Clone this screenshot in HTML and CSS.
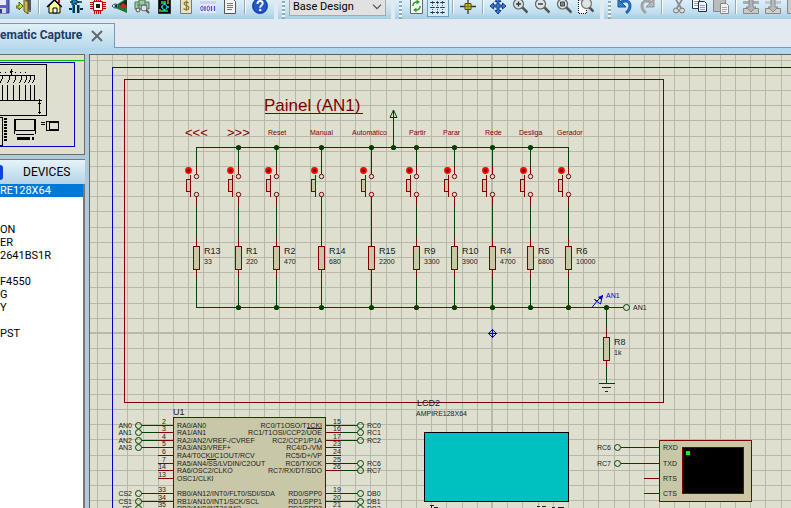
FILE: index.html
```html
<!DOCTYPE html>
<html lang="en">
<head>
<meta charset="utf-8">
<title>Schematic Capture</title>
<link rel="stylesheet" href="styles.css">
</head>
<body>
<header class="toolbar">
  <div class="group group-file">
    <button class="tool" aria-label="Save"><svg viewBox="0 0 16 16"><path d="M1 1h14v14H3l-2-2z" fill="#5a62c8" stroke="#303a90"/><path d="M4 1h8v6H4z" fill="#e8ecff"/><path d="M4 10h8v5H4z" fill="#d8d8d8"/><path d="M5 11h3v4H5z" fill="#303a90"/></svg></button>
    <button class="tool" aria-label="Close project"><svg viewBox="0 0 16 16"><path d="M8 1h7v11H8z" fill="#555"/><path d="M8 1l4 3v12l-4-3z" fill="#c8b858" stroke="#5d5318"/><path d="M12 12h3v2h-3z" fill="#777"/><path d="M0 8h3V4l4 4-4 4v-2H0z" fill="#c8e020" stroke="#4a6010"/></svg></button>
    <span class="sep"></span>
    <button class="tool" aria-label="Home"><svg viewBox="0 0 16 16"><path d="M3 8v7h11V8L8.500 2z" fill="#ffff80" stroke="#000"/><path d="M1 9l7.500-7L16 9" fill="none" stroke="#000" stroke-width="1.500"/><path d="M7 10h4v5H7z" fill="#f8f8ff" stroke="#000"/><path d="M12 1h2v4h-2z" fill="#a02020"/></svg></button>
    <button class="tool" aria-label="Schematic capture"><svg viewBox="0 0 16 16"><path d="M8 0v7M2 4h12" stroke="#083040" stroke-width="1.500"/><path d="M4 0l7 4-7 3z" fill="#1880c8" stroke="#083040"/><path d="M1 11h4M11 11h4" stroke="#083040" stroke-width="2"/><path d="M6 7v8M10 7v8" stroke="#083040" stroke-width="2"/><path d="M4.500 7v8M11.500 7v8" stroke="#3098d8"/></svg></button>
    <button class="tool" aria-label="PCB layout"><svg viewBox="0 0 16 16"><path d="M4.500 0v16M6.500 0v16M8.500 0v16M10.500 0v16M0 4.500h16M0 6.500h16M0 8.500h16M0 10.500h16" stroke="#c00000"/><path d="M3.500 3.500h9v9h-9z" fill="#fff" stroke="#c00000"/><path d="M6 6h4v4H6z" fill="#181818"/></svg></button>
    <button class="tool" aria-label="3D visualizer"><svg viewBox="0 0 16 16"><path d="M15 0v15L1 9z" fill="#187830"/><path d="M15 1v8L7 7z" fill="#103020"/><path d="M11 5l4 3-4 3-3-3z" fill="#e02020"/><path d="M0 8q3-4 7 0-4 4-7 0z" fill="#d8eef8" stroke="#285060"/><circle cx="4" cy="8" r="1.500" fill="#203038"/></svg></button>
    <button class="tool" aria-label="Gerber viewer"><svg viewBox="0 0 16 16"><path d="M1 4h4V2h6v2h4v7H1z" fill="#9ccc9c" stroke="#52705a"/><path d="M3 7h10M5 4v7M11 4v7" stroke="#57725d"/><circle cx="4" cy="12" r="2" fill="#d5e3e8" stroke="#555"/><circle cx="10" cy="10" r="3" fill="#d5e3e8" stroke="#667"/><path d="M12 12l3 3" stroke="#555" stroke-width="2"/></svg></button>
    <button class="tool" aria-label="Design explorer"><svg viewBox="0 0 16 16"><path d="M2.500 .5h12v15h-12z" fill="#000" stroke="#303030"/><path d="M5 3h5v3H5zM5 12h7v2H5z" fill="#00b030"/><path d="M8.500 5v8M5 9h8" stroke="#00e8f0" stroke-width="1.500"/><circle cx="8.500" cy="9" r="2.500" fill="#000" stroke="#00e8f0"/><path d="M12 2v4M4 11v3" stroke="#e8ec40"/></svg></button>
    <button class="tool" aria-label="Bill of materials"><svg viewBox="0 0 16 16"><path d="M2.500 .5h11v15h-11z" fill="#e8e2c8" stroke="#777"/><path d="M10.500 5q-2-2-4-.5-1 2.500 2 3 3 1 2 3.500-3 1.500-5-.5M8.500 2.500v10.500" fill="none" stroke="#8c7a28" stroke-width="1.300"/></svg></button>
    <button class="tool" aria-label="Source code"><svg viewBox="0 0 16 16"><path d="M0 0h16v15H0z" fill="#e6eaff"/><path d="M0 3h16v3H0z" fill="#c9d6f0"/><ellipse cx="2" cy="10.500" rx="1.200" ry="2.500" fill="none" stroke="#5050c8"/><path d="M5 8v5M11.500 8v5M14.500 8v5" stroke="#5050c8" stroke-width="1.300"/><ellipse cx="8.300" cy="10.500" rx="1.200" ry="2.500" fill="none" stroke="#5050c8"/></svg></button>
    <button class="tool" aria-label="Project notes"><svg viewBox="0 0 16 16"><path d="M2.500 .5h8l3 3v12h-11z" fill="#f5f5f5" stroke="#555"/><path d="M5 5.500h6M5 7.500h6M5 9.500h6M5 11.500h5" stroke="#777"/></svg></button>
    <span class="sep"></span>
    <button class="tool" aria-label="Help"><svg viewBox="0 0 16 16"><circle cx="8" cy="8" r="8" fill="#2458c8"/><circle cx="8" cy="8" r="7" fill="none" stroke="#1a3e98"/><path d="M5.500 6q0-3 2.700-3 2.500 0 2.500 2.200 0 1.500-1.600 2.500-.9.600-.9 2" fill="none" stroke="#fff" stroke-width="1.900"/><circle cx="8.200" cy="12" r="1.200" fill="#fff"/></svg></button>
  </div>
  <div class="group group-variant">
    <span class="grip"></span>
    <label class="variant"><span class="hidden-label">Variant</span>
      <select><option>Base Design</option></select>
      <svg class="chevron" viewBox="0 0 10 6"><path d="M1 .7l4 4 4-4" fill="none" stroke="#505050" stroke-width="1.200"/></svg>
    </label>
  </div>
  <div class="group">
    <span class="grip"></span>
    <button class="tool" aria-label="Redraw"><svg viewBox="0 0 16 16"><path d="M2.500 .5h12v15h-12z" fill="#f6f6f6" stroke="#666"/><path d="M5 8q0-4 4-4M12 8q0 4-4 4" fill="none" stroke="#30a030" stroke-width="1.600"/><path d="M8.500 1.500l3.500 2.500-3.500 2.500zM8.500 9.500L5 12l3.500 2.500z" fill="#30a030"/></svg></button>
    <button class="tool pressed" aria-label="Grid"><svg viewBox="0 0 16 16"><path d="M2.500 0v16M7.500 0v16M12.500 0v16M0 3.500h16M0 8.500h16M0 13.500h16" stroke="#505860" stroke-dasharray="1 1"/><path d="M1 8.500h3M6 8.500h3M11 8.500h3M1 13.500h3M6 13.500h3M11 13.500h3M1 3.500h3M6 3.500h3M11 3.500h3" stroke="#303840"/></svg></button>
    <span class="sep"></span>
    <button class="tool" aria-label="Origin"><svg viewBox="0 0 16 16"><path d="M8 1v15M0 8.500h16" stroke="#333" stroke-width="1.300"/><path d="M5 5.500h6v6H5z" fill="#c8b820" stroke="#504a10"/><path d="M8 5.500v6M5 8.500h6" stroke="#807818"/></svg></button>
    <span class="sep"></span>
    <button class="tool" aria-label="Pan"><svg viewBox="0 0 16 16"><path d="M8 0l3 3.500H9V7h3.500V5L16 8l-3.500 3V9H9v3.500h2L8 16l-3-3.500h2V9H3.500v2L0 8l3.500-3v2H7V3.500H5z" fill="#3080e0" stroke="#102c68" stroke-width=".9"/></svg></button>
    <button class="tool" aria-label="Zoom in"><svg viewBox="0 0 16 16"><path d="M10 9l5.500 5.500" stroke="#555" stroke-width="2.500"/><circle cx="6.500" cy="6" r="5" fill="#dce4e8" stroke="#666" stroke-width="1.200"/><path d="M4 6h5M6.500 3.500v5" stroke="#333" stroke-width="1.400"/></svg></button>
    <button class="tool" aria-label="Zoom out"><svg viewBox="0 0 16 16"><path d="M10 9l5.500 5.500" stroke="#555" stroke-width="2.500"/><circle cx="6.500" cy="6" r="5" fill="#dce4e8" stroke="#666" stroke-width="1.200"/><path d="M4 6h5" stroke="#333" stroke-width="1.400"/></svg></button>
    <button class="tool" aria-label="Zoom all"><svg viewBox="0 0 16 16"><path d="M10 9l5.500 5.500" stroke="#555" stroke-width="2.500"/><circle cx="6.500" cy="6" r="5" fill="#dce4e8" stroke="#666" stroke-width="1.200"/><path d="M4.500 4h4v4h-4z" fill="#888" stroke="#444"/></svg></button>
    <button class="tool" aria-label="Zoom area"><svg viewBox="0 0 16 16"><path d="M.5 2h8v13.500h-8z" fill="#fff" stroke="#111" stroke-dasharray="1 1"/><path d="M11 9l4.500 4.500" stroke="#555" stroke-width="2.500"/><circle cx="8.500" cy="5.500" r="5" fill="#dce4e8" stroke="#777" stroke-width="1.200"/></svg></button>
  </div>
  <div class="group group-edit">
    <span class="grip"></span>
    <button class="tool" aria-label="Undo"><svg viewBox="0 0 16 16"><path d="M4 4q9-3 9 4 0 4-4 7" fill="none" stroke="#2868b8" stroke-width="3"/><path d="M1 1v8h8z" fill="#3080d0" stroke="#1a5098"/></svg></button>
    <button class="tool" aria-label="Redo"><svg viewBox="0 0 16 16"><path d="M12 4q-9-3-9 4 0 4 4 7" fill="none" stroke="#a0a4a8" stroke-width="3"/><path d="M15 1v8H7z" fill="#b4b8ba" stroke="#909498"/></svg></button>
    <span class="sep"></span>
    <button class="tool" aria-label="Cut"><svg viewBox="0 0 16 16"><path d="M6 0l6 10M14 0L8 10" stroke="#8a8e92" stroke-width="1.800"/><circle cx="7" cy="12.500" r="2.500" fill="#d8d8d8" stroke="#777"/><circle cx="13" cy="12.500" r="2.500" fill="#d8d8d8" stroke="#777"/></svg></button>
    <button class="tool" aria-label="Copy"><svg viewBox="0 0 16 16"><path d="M1.500 .5h7v10h-7z" fill="#fff" stroke="#333a48"/><path d="M3 3.500h4M3 5.500h4M3 7.500h4" stroke="#90a0b8"/><path d="M7.500 3.500h6l2 2v8h-8z" fill="#f0f4fc" stroke="#252d42"/><path d="M9 7.500h5M9 9.500h5M9 11.500h5" stroke="#90a0b8"/></svg></button>
    <button class="tool" aria-label="Paste"><svg viewBox="0 0 16 16"><path d="M.5 .5h12v13H.5z" fill="#b8bcbe" stroke="#888"/><path d="M7.500 5.500h6l2 2v8h-8z" fill="#f0f0f0" stroke="#888"/><path d="M9 9.500h5M9 11.500h5M9 13.500h4" stroke="#aaa"/></svg></button>
    <span class="sep"></span>
    <button class="tool" aria-label="Block copy"><svg viewBox="0 0 16 16"><path d="M.5 10.500h15v5H.5z" fill="#c8c8c8" stroke="#888"/><path d="M0 3h16v3H0z" fill="#a8acae"/><path d="M6 0h4v9h3l-5 5-5-5h3z" fill="#b0b2b4" stroke="#888"/></svg></button>
    <button class="tool" aria-label="Block move"><svg viewBox="0 0 16 16"><path d="M.5 10.500h15v5H.5z" fill="#d0d0d0" stroke="#888"/><path d="M0 3h16v3H0z" fill="#c4c8ca"/><path d="M6 0h4v9h3l-5 5-5-5h3z" fill="#b8babc" stroke="#888"/></svg></button>
    <button class="tool" aria-label="Block rotate"><svg viewBox="0 0 16 16"><path d="M.5 .5h15v15H.5z" fill="#c8c8c8" stroke="#888"/></svg></button>
  </div>
</header>
<nav class="tabs">
  <div class="tab">
    <a class="tab-link" href="#schematic">ematic Capture</a>
    <button class="tab-close" aria-label="Close tab"><svg viewBox="0 0 12 12"><path d="M1 1l10 10M11 1L1 11" stroke="#666" stroke-width="2"/></svg></button>
  </div>
</nav>
<main class="workspace">
  <aside class="side">
    <div class="overview">
      <svg class="overview-map" aria-hidden="true">
        <g fill="none" shape-rendering="crispEdges">
          <path d="M0 5.500h84" stroke="#00c000"/>
          <path d="M0 7.500h74.500v84H0" stroke="#0000c0"/>
          <g stroke="#000">
            <path d="M0 9.500h46.500v51H0M0 20.500h34M0 45.500h42M11.500 14v7M10 16.500h3M39.500 44v15M38 57.500h3M38 48.500h3"/>
            <path d="M7.500 30v16M13.500 30v16M19.500 30v16M25.500 30v16M30.500 30v16M34.500 30v16M2.500 30v16M2 20v4l-2 4M9.500 20v4l-2 4M15.500 20v4l-2 4M21.500 20v4l-2 4M26.500 20v4l-2 4M30.500 20v4l-2 4M34.500 20v4l-2 4"/>
            <path d="M0 17.500h28" stroke-dasharray="1 4"/>
            <path d="M0 62.500h2.500v28H0"/>
            <path d="M15.500 64.500h19v11h-19zM14.500 64v15M35.500 64v15M16 79.500h18"/>
            <path d="M46.500 66.500h12v9h-12zM49.500 67.500h9v7h-9z"/>
            <path d="M41 67.500h4M41 69.500h4"/>
            <path d="M5.500 63v24" stroke-width="3" stroke-dasharray="2 1"/>
            <path d="M17 83.500h13M32 83.500h2" stroke-width="3"/>
          </g>
        </g>
      </svg>
    </div>
    <div class="devices-head"><button class="pick" aria-label="Pick devices"></button><h2 class="devices-title">DEVICES</h2></div>
    <ul class="devices">
      <li class="device selected">RE128X64</li><li class="device"></li><li class="device"></li>
      <li class="device">ON</li><li class="device">ER</li><li class="device">2641BS1R</li>
      <li class="device"></li><li class="device">F4550</li><li class="device">G</li>
      <li class="device">Y</li><li class="device"></li><li class="device">PST</li>
    </ul>
  </aside>
  <section class="sheet" id="schematic">
    <svg class="drawing" role="img" aria-label="Schematic"><g id="scene" transform="translate(-90 -55)"></g></svg>
  </section>
</main>
<script src="schematic.js"></script>
</body>
</html>
```
FILE: styles.css
```css
* { box-sizing: border-box; }
body {
  margin: 0;
  height: 100vh;
  display: flex;
  flex-direction: column;
  overflow: hidden;
  background: #e2e9f0;
  color: #000;
  font-family: Roboto, "Liberation Sans", sans-serif;
  font-size: 11px;
}
button { border: 0; padding: 0; background: none; font: inherit; }

.toolbar { display: flex; flex: none; gap: 4px; height: 19px; overflow: hidden; }
.group {
  display: flex;
  flex: none;
  align-items: flex-end;
  padding: 0 3px 5px 0;
  background: linear-gradient(#dceef8, #c3e0f0 60%, #a9cde1);
}
.group-file { margin-left: -9px; }
.group-edit { flex: 1 0 auto; }
.tool { display: flex; flex: none; justify-content: center; width: 22px; height: 16px; }
.tool svg { width: 16px; height: 16px; }
.pressed { height: 20px; margin-bottom: -3px; padding-top: 1px; border: 1px solid #6d9fc0; background: #d5ebf7; }
.sep { flex: none; width: 2px; height: 16px; margin: 0 3px; border-left: 1px solid #98a8b4; border-right: 1px solid #fff; }
.grip { flex: none; width: 3px; height: 18px; margin: 0 3px -5px 4px; background: repeating-linear-gradient(#8fa9b8 0 2px, #eef8fc 2px 4px); }
.variant { position: relative; margin: 0 2px -2px 1px; }
.variant select {
  display: block;
  appearance: none;
  width: 97px;
  height: 20px;
  padding: 0 0 0 3px;
  border: 1px solid #a8a8a8;
  border-radius: 0;
  background: #e1e1e1;
  color: #000;
  font: inherit;
}
.chevron { position: absolute; right: 4px; top: 8px; width: 10px; height: 6px; }
.hidden-label { position: absolute; width: 1px; height: 1px; overflow: hidden; clip-path: inset(50%); }

.tabs {
  display: flex;
  flex: none;
  height: 35px;
  padding: 4px 0 6px;
  background: linear-gradient(#e2e9f0 28px, #6f9dbb 28px 29px, #b5d7eb 29px);
}
.tab {
  display: flex;
  align-items: center;
  gap: 9px;
  width: 115px;
  border: 1px solid #6f9dbb;
  border-width: 1px 1px 0 0;
  background: linear-gradient(#e1f0f8, #b9daec);
}
.tab-link { color: #1e3c64; font-size: 12px; font-weight: 700; line-height: 14px; padding-bottom: 2px; text-decoration: none; white-space: nowrap; }
.tab-close { width: 12px; height: 12px; }
.tab-close svg { display: block; width: 12px; height: 12px; }

.workspace { display: flex; flex: 1; min-height: 0; gap: 4px; background: #aecbdc; }
.side { display: flex; flex: none; flex-direction: column; width: 85px; overflow: hidden; }
.overview {
  flex: none;
  height: 101px;
  margin-bottom: 4px;
  border: solid #6b6b6b;
  border-width: 1px 1px 1px 0;
  background: #dfdfcf;
}
.overview-map { display: block; width: 100%; height: 99px; }
.devices-head {
  display: flex;
  flex: none;
  align-items: center;
  height: 25px;
  border-top: 1px solid #777;
  background: linear-gradient(#e6f3fa, #b4d4e6);
}
.pick { width: 3px; height: 15px; border-radius: 0 3px 3px 0; background: #0846d8; }
.devices-title { margin: 0 0 0 20px; font-size: 12px; font-weight: 400; }
.devices { flex: 1; margin: 0; padding: 0; list-style: none; background: #fff; border-right: 2px solid #777; }
.device { height: 13px; line-height: 14px; }
.selected { background: #0078d7; color: #fff; }

.sheet { flex: 1; min-width: 0; border: solid #606060; border-width: 1px 0 0 1px; background: #dfdfcf; }
.drawing { display: block; width: 100%; height: 100%; }

#scene { font-family: "Liberation Sans", Arial, sans-serif; }
#scene text { fill: #202020; }
#scene .tiny { font-size: 7px; }
#scene .ref { font-size: 9px; }
#scene .mark { font-size: 13px; fill: #800000; }
#scene .title { font-size: 17px; fill: #800000; }
#scene .caption { font-size: 7px; fill: #800000; }
#scene .probe { font-size: 7px; fill: #0000c0; }
.crisp { shape-rendering: crispEdges; }
.line { fill: none; stroke-width: 1; }
.wire { stroke: #004000; }
.pin { stroke: #800000; }
.frame { stroke: #0000c0; }
.grid { stroke: #b9b9ab; }
.dot { fill: #004000; }
.body { fill: #c8c8a8; stroke: #800000; }
.overline { stroke: #202020; }
```
FILE: schematic.js
```javascript
const out = [];
const path = (cls, d) => out.push(`<path class="line crisp ${cls}" d="${d}"/>`);
const rect = (cls, x, y, w, h) => out.push(`<rect class="crisp ${cls}" x="${x + 0.5}" y="${y + 0.5}" width="${w}" height="${h}"/>`);
const text = (cls, x, y, s, anchor = 'start') =>
  out.push(`<text class="${cls}" x="${x}" y="${y}" text-anchor="${anchor}">${s.replace(/</g, '&lt;')}</text>`);
const ring = (cls, x, y, r, fill = 'none') =>
  out.push(`<circle class="${cls}" cx="${x + 0.5}" cy="${y + 0.5}" r="${r}" fill="${fill}"/>`);
const v = (cls, x, y1, y2) => path(cls, `M${x + 0.5} ${y1}V${y2}`);
const h = (cls, y, x1, x2) => path(cls, `M${x1} ${y + 0.5}H${x2}`);
const junction = (x, y) => ring('dot', x, y, 2.6, '#004000');

// Grid, with heavier lines through the sheet origin at 492, 333
const STEP = 15.19;
for (let k = -27; k < 120; k++) v('grid', Math.round(492 + k * STEP), 0, 2400);
for (let k = -19; k < 120; k++) h('grid', Math.round(333 + k * STEP), 0, 3200);
v('grid', 491, 0, 2400);
h('grid', 332, 0, 3200);

path('frame', 'M112.5 2400V67.500H3200');
path('pin', 'M124.500 79.500H663.500V402.500H124.500Z');

// Button panel
text('title', 264, 111, 'Painel (AN1)');
h('pin', 113, 265, 363);
h('wire', 147, 196, 569);
h('wire', 307, 196, 623);

const columns = [
  [196, '<<<', 185, 'R13', '33', -8], [238, '>>>', 227, 'R1', '220', -8],
  [276, 'Reset', 268, 'R2', '470', -8], [321, 'Manual', 310, 'R14', '680', -7],
  [371, 'Automático', 352, 'R15', '2200', -8], [416, 'Partir', 409, 'R9', '3300', -7],
  [454, 'Parar', 443, 'R10', '3900', -7], [492, 'Rede', 485, 'R4', '4700', -7],
  [530, 'Desliga', 519, 'R5', '6800', -7], [568, 'Gerador', 557, 'R6', '10000', -7],
];

function resistor(x, y, name, value) {
  v('pin', x, y - 8, y + 31);
  rect('body', x - 3, y, 6, 23);
  text('ref', x + 8, y + 8, name);
  text('tiny', x + 8, y + 18, value);
}

columns.forEach(([x, label, lx, name, value, dx], i) => {
  text(i < 2 ? 'mark' : 'caption', lx, i < 2 ? 137 : 135, label);
  v('wire', x, 147, 167);
  v('pin', x, 166, 174);
  v('pin', x, 196, 206);
  v('wire', x, 206, 238);
  v('wire', x, 277, 308);
  const bar = x + dx + (dx === -8 ? 2 : 1);
  v('pin', bar, 175, 197);
  rect('body', bar - 4, 179, 4, 12);
  ring('', x + dx, 170, 3.4, '#ff0000');
  ring('', x + dx, 170, 1.6, '#800000');
  ring('pin', x, 176, 2.2, '#dfdfcf');
  ring('pin', x, 194, 2.2, '#dfdfcf');
  resistor(x, 246, name, value);
  if (i > 0 && i < 9) junction(x, 147);
  if (i > 0) junction(x, 307);
});

// Supply terminal
junction(393, 147);
v('wire', 393, 110, 147);
out.push('<path class="line wire" d="M393.500 110L397 117.500H390Z"/>');

// Voltage probe and AN1 terminal
out.push('<path class="line frame" d="M592 307.500L597 301M597 301L602.500 295.500L600.500 304L594.500 299.500Z"/>');
out.push('<path fill="#0000c0" d="M603 295L598 297L601.500 300Z"/>');
text('probe', 606, 298, 'AN1');
ring('line wire', 626, 307, 3);
text('tiny', 633, 310, 'AN1');
junction(606, 307);
v('wire', 606, 307, 330);
v('wire', 606, 368, 384);
resistor(606, 337, 'R8', '1k');
h('wire', 383, 599, 615);
h('wire', 387, 602, 611);
h('wire', 391, 605, 608);

// Origin marker
path('frame', 'M492.500 329.500L496.500 333.500L492.500 337.500L488.500 333.500Z');
h('frame', 333, 488, 497);
v('frame', 492, 329, 338);

// Microcontroller
out.push('<path class="body crisp" d="M173.500 2400V417.500H325.500V2400"/>');
text('ref', 173, 415, 'U1');
const left = [
  [425, '2', 'RA0/AN0', 'AN0'], [432, '3', 'RA1/AN1', 'AN1'],
  [440, '4', 'RA2/AN2/VREF-/CVREF', 'AN2'], [447, '5', 'RA3/AN3/VREF+', 'AN3'],
  [455, '6', 'RA4/T0CKI/C1OUT/RCV'], [463, '7', 'RA5/AN4/SS/LVDIN/C2OUT'],
  [470, '14', 'RA6/OSC2/CLKO'], [478, '13', 'OSC1/CLKI'],
  [493, '33', 'RB0/AN12/INT0/FLT0/SDI/SDA', 'CS2'],
  [501, '34', 'RB1/AN10/INT1/SCK/SCL', 'CS1'], [508, '35', 'RB2/AN8/INT2/VMO', 'RS'],
];
const right = [
  [425, '15', 'RC0/T1OSO/T1CKI', 'RC0'], [432, '16', 'RC1/T1OSI/CCP2/UOE', 'RC1'],
  [440, '17', 'RC2/CCP1/P1A', 'RC2'], [447, '23', 'RC4/D-/VM'], [455, '24', 'RC5/D+/VP'],
  [463, '25', 'RC6/TX/CK', 'RC6'], [470, '26', 'RC7/RX/DT/SDO', 'RC7'],
  [493, '19', 'RD0/SPP0', 'DB0'], [501, '20', 'RD1/SPP1', 'DB1'], [508, '21', 'RD2/SPP2', 'DB2'],
];
left.forEach(([y, num, name, net]) => {
  h('pin', y, 158, 173);
  text('tiny', 166, y - 1, num, 'end');
  text('tiny', 177, y + 3, name);
  if (!net) return;
  h('wire', y, 142, 158);
  ring('line wire', 138, y, 3);
  text('tiny', 132, y + 3, net, 'end');
});
right.forEach(([y, num, name, net]) => {
  h('pin', y, 326, 341);
  text('tiny', 333, y - 1, num);
  text('tiny', 322, y + 3, name, 'end');
  if (!net) return;
  h('wire', y, 341, 357);
  ring('line wire', 360, y, 3);
  text('tiny', 367, y + 3, net);
});
path('overline', 'M307 428.500H322M207 459.500H216');

// Display
text('ref', 417, 406, 'LCD2');
text('tiny', 416, 416, 'AMPIRE128X64');
out.push('<rect class="crisp" x="424.500" y="432.500" width="144" height="69" fill="#00c0c0" stroke="#000"/>');
path('overline', 'M430 505.500H434M431.500 505V508M434 507.500H438M537 506.500H540M542 506.500H546M552 507.500H555M558 507.500H564');

// Virtual terminal
rect('body', 659, 440, 92, 61);
out.push('<rect class="crisp pin" x="682.500" y="447.500" width="61" height="46" fill="#000"/>');
out.push('<rect class="crisp" x="686" y="451" width="4" height="4" fill="#00ff00"/>');
[[447, 'RXD', 'RC6'], [463, 'TXD', 'RC7'], [478, 'RTS'], [493, 'CTS']].forEach(([y, name, net]) => {
  h('pin', y, 644, 659);
  text('tiny', 663, y + 3, name);
  if (!net) return;
  h('wire', y, 621, 644);
  ring('line wire', 617, y, 3);
  text('tiny', 611, y + 3, net, 'end');
});

document.getElementById('scene').innerHTML = out.join('');
```
